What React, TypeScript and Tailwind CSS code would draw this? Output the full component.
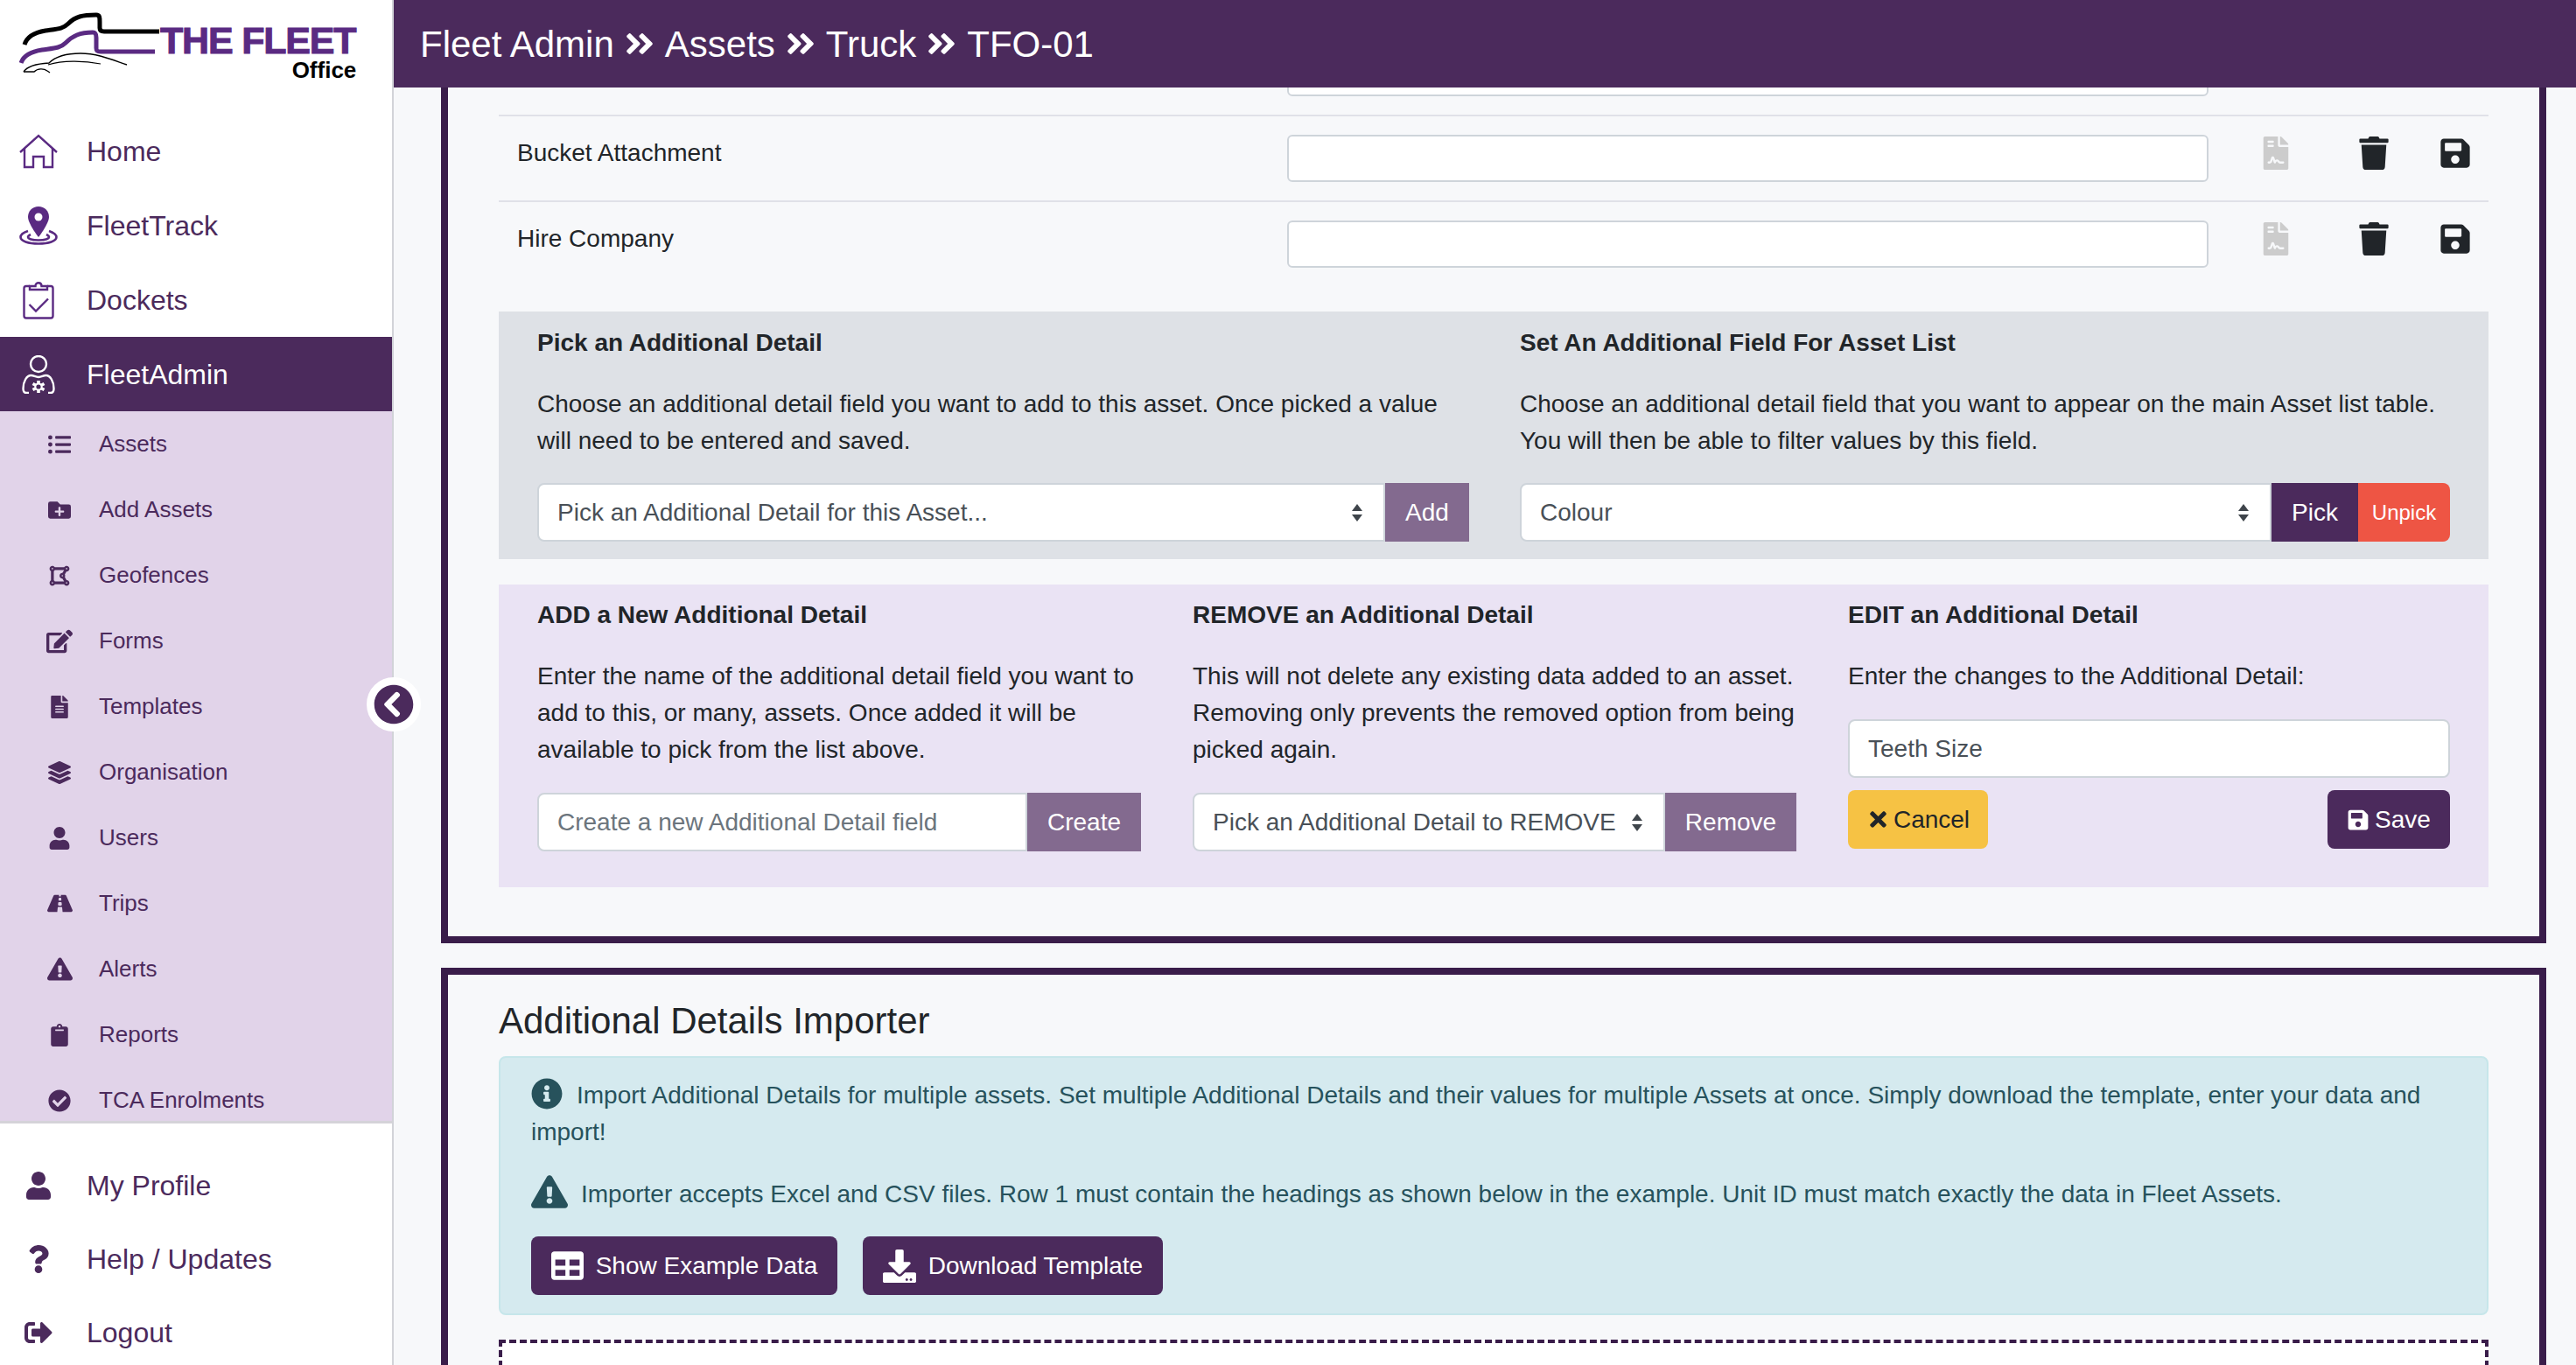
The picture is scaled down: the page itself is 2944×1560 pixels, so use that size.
import {
  FaAngleDoubleRight,
  FaCheckCircle,
  FaChevronCircleLeft,
  FaClipboard,
  FaDownload,
  FaDrawPolygon,
  FaEdit,
  FaExclamationTriangle,
  FaFileAlt,
  FaFileContract,
  FaFolderPlus,
  FaInfoCircle,
  FaLayerGroup,
  FaListUl,
  FaQuestion,
  FaRoad,
  FaSave,
  FaSignOutAlt,
  FaTable,
  FaTimes,
  FaTrash,
  FaUser,
} from "react-icons/fa"

// Sidebar drawings that the icon packs don't have

function Logo() {
  return (
    <svg width="160" height="90" viewBox="0 0 160 90" fill="none" className="shrink-0">
      <path d="M6 37c3-10 12-14 24-16 14-2 20-2 26-8 8-8 16-10 32-10 4 0 4 3 4 8v7c0 3 2 4 5 4h63" stroke="#000" strokeWidth="5" />
      <path d="M2 58c3-9 11-13 24-15 14-2 21-2 27-8 8-8 16-12 31-12 3 0 4 2 4 6v12c0 3 1 4 5 4h62" stroke="#5a2a82" strokeWidth="5" />
      <path d="M5 68c4-6 12-9 29-10 8-8 22-11 36-11 20 0 38 8 53 13" stroke="#000" strokeWidth="1.4" />
      <path d="M33 60c16-5 40-5 60-1" stroke="#000" strokeWidth="1.2" />
      <path d="M5 68h12c4-4 11-4 15-1l3 2" stroke="#000" strokeWidth="1.4" />
    </svg>
  )
}

function HomeIcon() {
  return (
    <svg width="44" height="40" viewBox="0 0 44 40" fill="none" stroke="#5a2a82" strokeWidth="2.4">
      <path d="M1 21 22 2l21 19" />
      <path d="M6 17v21h10V26h12v12h10V17" />
    </svg>
  )
}

function TrackIcon() {
  return (
    <svg width="44" height="44" viewBox="0 0 44 44">
      <path d="M10 28C4 30 1.500 32 1.500 35c0 4.500 9 7.500 20.500 7.500s20.500-3 20.500-7.500c0-3-3-5-8.500-7" fill="none" stroke="#5a2a82" strokeWidth="2.6" />
      <path d="M13 32c-2 1-3 2-3 3 0 2 5 3.500 12 3.500s12-1.500 12-3.500c0-1-1-2-3-3" fill="none" stroke="#5a2a82" strokeWidth="2.6" />
      <path d="M22 0C15 0 10 5 10 12c0 6 8 18 12 23 4-5 12-17 12-23C34 5 29 0 22 0z" fill="#5a2a82" />
      <circle cx="22" cy="12" r="4.500" fill="#fff" />
    </svg>
  )
}

function DocketIcon() {
  return (
    <svg width="36" height="44" viewBox="0 0 36 44" fill="none" stroke="#5a2a82" strokeWidth="2.4">
      <path d="M8 6H4a2.500 2.500 0 0 0-2.500 2.500V40A2.500 2.500 0 0 0 4 42.500h28a2.500 2.500 0 0 0 2.500-2.500V8.500A2.500 2.500 0 0 0 32 6h-4" />
      <path d="M8 10V6h6.500c0-5 7-5 7 0H28v4z" />
      <path d="m7.500 27 7.500 7.500L29 20.500" />
    </svg>
  )
}

function AdminIcon() {
  return (
    <svg width="38" height="44" viewBox="0 0 38 44" fill="none" stroke="#fff" strokeWidth="2.4">
      <circle cx="19" cy="10" r="9" />
      <path d="M8 43H5c-2 0-3.500-2-3.500-5 0-8 4-15 9-15 3 0 5 2 8.500 2s5.500-2 8.500-2c5 0 9 7 9 15 0 3-1.500 5-3.500 5h-3" />
      <g stroke="#fff" strokeWidth="3.600">
        <path d="M19 29v14M12.500 32.500l13 7M25.500 32.500l-13 7" />
      </g>
      <circle cx="19" cy="36" r="3.600" fill="#4b2a5c" stroke="#fff" strokeWidth="2" />
    </svg>
  )
}

function SelectArrows() {
  return (
    <svg width="14" height="20" viewBox="0 0 14 20" fill="#3f454b" className="pointer-events-none absolute top-[24px] right-[25px]">
      <path d="M7 0l6 8H1z" />
      <path d="M7 20l6-8H1z" />
    </svg>
  )
}

const subMenu = [
  { label: "Assets", icon: <FaListUl size={26} /> },
  { label: "Add Assets", icon: <FaFolderPlus size={26} /> },
  { label: "Geofences", icon: <FaDrawPolygon size={26} /> },
  { label: "Forms", icon: <FaEdit size={30} /> },
  { label: "Templates", icon: <FaFileAlt size={26} /> },
  { label: "Organisation", icon: <FaLayerGroup size={26} /> },
  { label: "Users", icon: <FaUser size={26} /> },
  { label: "Trips", icon: <FaRoad size={29} /> },
  { label: "Alerts", icon: <FaExclamationTriangle size={29} /> },
  { label: "Reports", icon: <FaClipboard size={26} /> },
  { label: "TCA Enrolments", icon: <FaCheckCircle size={26} /> },
]

function MainLink({ label, icon, active, slim }: { label: string; icon: React.ReactNode; active?: boolean; slim?: boolean }) {
  return (
    <div className={`flex ${slim ? "h-[84px]" : "h-[85px]"} shrink-0 items-center text-[32px] ${active ? "bg-[#4b2a5c] text-white" : "text-[#4b2a5c]"}`}>
      <span className="ml-[20px] flex w-[48px] justify-center">{icon}</span>
      <span className="ml-[31px]">{label}</span>
    </div>
  )
}

function Sidebar() {
  return (
    <aside className="flex h-full w-[450px] shrink-0 flex-col border-r-2 border-[#d2d3d8] bg-white">
      <div className="flex h-[130px] shrink-0 items-start pt-[14px] pl-[22px]">
        <Logo />
        <div className="ml-[1px] flex flex-col items-end pt-[10px]">
          <span className="text-[43px] leading-[44px] font-bold tracking-[-1.2px] text-[#5a2a82] [-webkit-text-stroke:1px_#5a2a82]">THE FLEET</span>
          <span className="mt-[-3px] mr-[-1px] text-[26px] leading-[30px] font-bold text-black">Office</span>
        </div>
      </div>
      <MainLink label="Home" icon={<HomeIcon />} />
      <MainLink label="FleetTrack" icon={<TrackIcon />} />
      <MainLink label="Dockets" icon={<DocketIcon />} />
      <MainLink label="FleetAdmin" icon={<AdminIcon />} active />
      <div className="h-[814px] shrink-0 overflow-hidden border-b-[3px] border-[#d5d3d9] bg-[#e1d3e9]">
        {subMenu.map(item => (
          <div key={item.label} className="flex h-[75px] items-center text-[26px] text-[#4b2a5c]">
            <span className="ml-[48px] flex w-[40px] justify-center">{item.icon}</span>
            <span className="ml-[25px]">{item.label}</span>
          </div>
        ))}
      </div>
      <div className="pt-[29px]">
        <MainLink label="My Profile" icon={<FaUser size={32} />} slim />
        <MainLink label="Help / Updates" icon={<FaQuestion size={32} />} slim />
        <MainLink label="Logout" icon={<FaSignOutAlt size={32} />} slim />
      </div>
    </aside>
  )
}

function Crumbs() {
  const parts = ["Fleet Admin", "Assets", "Truck", "TFO-01"]
  return (
    <header className="z-10 flex h-[100px] shrink-0 items-center bg-[#4b2a5c] pl-[30px] text-[42px] text-white">
      {parts.map((p, i) => (
        <span key={p} className="flex items-center">
          {i > 0 && <FaAngleDoubleRight size={38} className="mx-[10px]" />}
          {p}
        </span>
      ))}
    </header>
  )
}

function DetailRow({ label }: { label: string }) {
  return (
    <div className="flex h-[98px] items-start border-t-2 border-[#e0e1e8] pt-[21px]">
      <div className="w-[901px] pl-[21px] text-[28px] leading-[42px] text-[#212529]">{label}</div>
      <input className="h-[54px] w-[1053px] rounded-[6px] border-2 border-[#ced4da] bg-white" />
      <FaFileContract size={38} className="mt-[2px] ml-[58px] text-[#cccccc]" />
      <FaTrash size={38} className="mt-[2px] ml-[74px] text-[#212529]" />
      <FaSave size={38} className="mt-[2px] ml-[55px] text-[#212529]" />
    </div>
  )
}

function PickSelect({ text }: { text: string }) {
  return (
    <div className="relative min-w-0 flex-1">
      <select className="h-[67px] w-full appearance-none rounded-l-[8px] border-2 border-[#ced4da] bg-white pl-[21px] text-[28px] text-[#495057]">
        <option>{text}</option>
      </select>
      <SelectArrows />
    </div>
  )
}

function Heading({ children }: { children: string }) {
  return <h5 className="mb-[28px] text-[28px] leading-[42px] font-bold text-[#212529]">{children}</h5>
}

function Para({ children }: { children: string }) {
  return <p className="text-[28px] leading-[42px] text-[#212529]">{children}</p>
}

export default function App() {
  return (
    <div className="flex h-[1560px] w-[2944px] overflow-hidden bg-[#f7f8fa] [font-family:'Liberation_Sans',Arial,sans-serif]">
      <Sidebar />
      <FaChevronCircleLeft
        size={46}
        className="absolute top-[774px] left-[419px] box-content rounded-full border-[8px] border-white bg-white text-[#4b2a5c]"
      />
      <main className="flex min-w-0 flex-1 flex-col">
        <Crumbs />
        <div className="min-h-0 flex-1 overflow-hidden pr-[34px] pl-[54px]">
          {/* panel is scrolled, its top edge sits above the header */}
          <section className="mt-[-67px] border-x-8 border-b-8 border-[#3a1d4a] px-[58px] pb-[56px]">
            <DetailRow label="" />
            <DetailRow label="Bucket Attachment" />
            <DetailRow label="Hire Company" />

            <div className="mt-[29px] grid grid-cols-2 bg-[#dee1e6] pt-[15px] pb-[20px]">
              <div className="pr-[28px] pl-[44px]">
                <Heading>Pick an Additional Detail</Heading>
                <Para>Choose an additional detail field you want to add to this asset. Once picked a value will need to be entered and saved.</Para>
                <div className="mt-[27px] flex">
                  <PickSelect text="Pick an Additional Detail for this Asset..." />
                  <button className="h-[67px] w-[96px] bg-[#836a8f] text-[28px] text-white">Add</button>
                </div>
              </div>
              <div className="pr-[44px] pl-[30px]">
                <Heading>Set An Additional Field For Asset List</Heading>
                <Para>Choose an additional detail field that you want to appear on the main Asset list table. You will then be able to filter values by this field.</Para>
                <div className="mt-[27px] flex">
                  <PickSelect text="Colour" />
                  <button className="h-[67px] w-[99px] bg-[#4b2a5c] text-[28px] text-white">Pick</button>
                  <button className="h-[67px] w-[105px] rounded-r-[8px] bg-[#ee5544] text-[24px] text-white">Unpick</button>
                </div>
              </div>
            </div>

            <div className="mt-[29px] grid grid-cols-[690px_690px_688px] gap-x-[59px] bg-[#eae3f4] pt-[14px] pr-[44px] pb-[41px] pl-[44px]">
              <div>
                <Heading>ADD a New Additional Detail</Heading>
                <Para>Enter the name of the additional detail field you want to add to this, or many, assets. Once added it will be available to pick from the list above.</Para>
                <div className="mt-[28px] flex">
                  <input
                    placeholder="Create a new Additional Detail field"
                    className="h-[67px] min-w-0 flex-1 rounded-l-[8px] border-2 border-[#ced4da] bg-white pl-[21px] text-[28px] placeholder:text-[#6c757d]"
                  />
                  <button className="h-[67px] w-[130px] bg-[#836a8f] text-[28px] text-white">Create</button>
                </div>
              </div>
              <div>
                <Heading>REMOVE an Additional Detail</Heading>
                <Para>This will not delete any existing data added to an asset. Removing only prevents the removed option from being picked again.</Para>
                <div className="mt-[28px] flex">
                  <PickSelect text="Pick an Additional Detail to REMOVE" />
                  <button className="h-[67px] w-[150px] bg-[#836a8f] text-[28px] text-white">Remove</button>
                </div>
              </div>
              <div>
                <Heading>EDIT an Additional Detail</Heading>
                <Para>Enter the changes to the Additional Detail:</Para>
                <input
                  defaultValue="Teeth Size"
                  className="mt-[28px] h-[67px] w-full rounded-[8px] border-2 border-[#ced4da] bg-white pl-[21px] text-[28px] text-[#495057]"
                />
                <div className="mt-[14px] flex justify-between">
                  <button className="flex h-[67px] w-[160px] items-center justify-center gap-[4px] rounded-[8px] bg-[#f6c244] text-[28px] text-[#212529]">
                    <FaTimes size={27} />
                    Cancel
                  </button>
                  <button className="flex h-[67px] w-[140px] items-center justify-center gap-[6px] rounded-[8px] bg-[#4b2a5c] text-[28px] text-white">
                    <FaSave size={26} />
                    Save
                  </button>
                </div>
              </div>
            </div>
          </section>

          <section className="mt-[28px] border-x-8 border-t-8 border-[#3a1d4a] px-[58px] pt-[29px]">
            <h4 className="mb-[16px] text-[42px] leading-[48px] text-[#212529]">Additional Details Importer</h4>
            <div className="rounded-[8px] border-2 border-[#c6e6ea] bg-[#d5eaef] px-[35px] pt-[22px] pb-[21px] text-[28px] leading-[42px] text-[#27525c]">
              <p>
                <FaInfoCircle size={36} className="mr-[16px] inline align-[-7px]" />
                Import Additional Details for multiple assets. Set multiple Additional Details and their values for multiple Assets at once. Simply download the template, enter your data and import!
              </p>
              <p className="mt-[26px]">
                <FaExclamationTriangle size={42} className="mr-[15px] inline align-[-9px]" />
                Importer accepts Excel and CSV files. Row 1 must contain the headings as shown below in the example. Unit ID must match exactly the data in Fleet Assets.
              </p>
              <div className="mt-[27px] flex gap-[29px]">
                <button className="flex h-[67px] w-[350px] items-center justify-center gap-[14px] rounded-[8px] bg-[#4b2a5c] text-white">
                  <FaTable size={37} />
                  Show Example Data
                </button>
                <button className="flex h-[67px] w-[343px] items-center justify-center gap-[14px] rounded-[8px] bg-[#4b2a5c] text-white">
                  <FaDownload size={38} />
                  Download Template
                </button>
              </div>
            </div>
            <div className="mt-[28px] h-[200px] border-4 border-dashed border-[#3a1d4a] bg-white" />
          </section>
        </div>
      </main>
    </div>
  )
}
